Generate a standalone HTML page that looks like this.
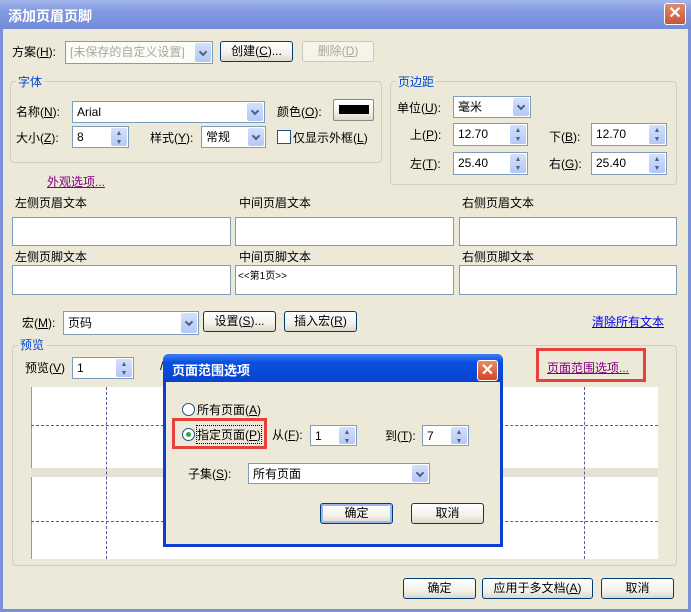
<!DOCTYPE html>
<html><head><meta charset="utf-8"><style>
*{box-sizing:border-box;margin:0;padding:0}
body{width:691px;height:612px;overflow:hidden;background:#fff;font-family:"Liberation Sans","Noto Sans CJK SC",sans-serif;font-size:12px;color:#000;position:relative}
.a{position:absolute;white-space:nowrap}
.win{left:0;top:0;width:691px;height:612px;background:#7c8fd9}
.body{left:3px;top:29px;width:685px;height:580px;background:#ECE9D8}
.title{left:0;top:0;width:691px;height:29px;background:linear-gradient(#a3b6ec,#8299e0 40%,#748cd9);color:#fff;font-weight:bold;font-size:14px;padding:6px 0 0 8px}
.x{width:22px;height:22px;border:1px solid #fff;border-radius:3px;background:linear-gradient(#e08a6e,#c8553a);color:#fff;font-size:16px;font-weight:bold;text-align:center;line-height:19px}
.btn{border:1px solid #003C74;border-radius:3px;background:linear-gradient(#fff,#f2f1ea 60%,#dcd8cc);text-align:center;line-height:18px}
.dis{border-color:#c9c7ba;color:#aca899;background:#f5f4ea}
.inp{background:#fff;border:1px solid #7F9DB9;padding:2px 0 0 4px;line-height:16px}
.dd{position:absolute;right:1px;top:1px;bottom:1px;width:16px;background:linear-gradient(#d4e0fc,#b5c8f6);border-radius:2px}
.dd::after{content:"";position:absolute;left:5px;top:50%;margin-top:-4px;width:4px;height:4px;border-right:2px solid #4d6185;border-bottom:2px solid #4d6185;transform:rotate(45deg)}
.sp{position:absolute;right:1px;top:1px;bottom:1px;width:16px;background:linear-gradient(#d4e0fc,#b5c8f6);border-radius:2px;color:#4d6185;font-size:7px;text-align:center;line-height:9px;padding-top:1px}
.grp{border:1px solid #d0d0bf;border-radius:4px}
.gt{color:#0046D5;background:#ECE9D8;padding:0 2px}
.box{background:#fff;border:1px solid #7F9DB9}
.lnk{color:#800080;text-decoration:underline}
u{text-decoration:underline}
.dh{height:0;border-top:1px dashed #555a9a}
.dv{width:0;border-left:1px dashed #555a9a}
</style></head><body>
<div class="a win"></div>
<div class="a body"></div>
<div class="a title">添加页眉页脚</div>
<div class="a x" style="left:664px;top:3px">✕</div>

<div class="a" style="left:12px;top:43px">方案(<u>H</u>):</div>
<div class="a inp" style="left:65px;top:41px;width:148px;height:23px;color:#aca899;background:#fbfbf8">[未保存的自定义设置]<div class="dd"></div></div>
<div class="a btn" style="left:220px;top:41px;width:73px;height:21px">创建(<u>C</u>)...</div>
<div class="a btn dis" style="left:302px;top:41px;width:72px;height:21px">删除(<u>D</u>)</div>

<div class="a grp" style="left:10px;top:81px;width:372px;height:82px"></div>
<div class="a gt" style="left:16px;top:73px">字体</div>
<div class="a" style="left:16px;top:103px">名称(<u>N</u>):</div>
<div class="a inp" style="left:72px;top:101px;width:193px;height:22px">Arial<div class="dd"></div></div>
<div class="a" style="left:277px;top:103px">颜色(<u>O</u>):</div>
<div class="a btn" style="left:333px;top:99px;width:41px;height:22px;border-color:#888;border-radius:2px"><div style="margin:5px auto;width:30px;height:9px;background:#000"></div></div>
<div class="a" style="left:16px;top:129px">大小(<u>Z</u>):</div>
<div class="a inp" style="left:72px;top:126px;width:57px;height:22px">8<div class="sp">▲<br>▼</div></div>
<div class="a" style="left:150px;top:129px">样式(<u>Y</u>):</div>
<div class="a inp" style="left:201px;top:126px;width:65px;height:22px">常规<div class="dd"></div></div>
<div class="a" style="left:277px;top:130px;width:14px;height:14px;border:1px solid #1c5180;background:#fff"></div>
<div class="a" style="left:293px;top:129px">仅显示外框(<u>L</u>)</div>

<div class="a grp" style="left:390px;top:81px;width:287px;height:104px"></div>
<div class="a gt" style="left:396px;top:73px">页边距</div>
<div class="a" style="left:397px;top:99px">单位(<u>U</u>):</div>
<div class="a inp" style="left:453px;top:96px;width:78px;height:22px">毫米<div class="dd"></div></div>
<div class="a" style="left:410px;top:126px">上(<u>P</u>):</div>
<div class="a inp" style="left:453px;top:123px;width:75px;height:23px">12.70<div class="sp">▲<br>▼</div></div>
<div class="a" style="left:549px;top:128px">下(<u>B</u>):</div>
<div class="a inp" style="left:591px;top:123px;width:76px;height:23px">12.70<div class="sp">▲<br>▼</div></div>
<div class="a" style="left:410px;top:155px">左(<u>T</u>):</div>
<div class="a inp" style="left:453px;top:152px;width:75px;height:23px">25.40<div class="sp">▲<br>▼</div></div>
<div class="a" style="left:549px;top:155px">右(<u>G</u>):</div>
<div class="a inp" style="left:591px;top:152px;width:76px;height:23px">25.40<div class="sp">▲<br>▼</div></div>

<div class="a lnk" style="left:47px;top:173px">外观选项...</div>
<div class="a" style="left:15px;top:194px">左侧页眉文本</div>
<div class="a" style="left:239px;top:194px">中间页眉文本</div>
<div class="a" style="left:462px;top:194px">右侧页眉文本</div>
<div class="a box" style="left:12px;top:217px;width:219px;height:29px"></div>
<div class="a box" style="left:235px;top:217px;width:219px;height:29px"></div>
<div class="a box" style="left:459px;top:217px;width:218px;height:29px"></div>
<div class="a" style="left:15px;top:248px">左侧页脚文本</div>
<div class="a" style="left:239px;top:248px">中间页脚文本</div>
<div class="a" style="left:462px;top:248px">右侧页脚文本</div>
<div class="a box" style="left:12px;top:265px;width:219px;height:30px"></div>
<div class="a box" style="left:235px;top:265px;width:219px;height:30px;font-size:10px;padding:1px 2px">&lt;&lt;第1页&gt;&gt;</div>
<div class="a box" style="left:459px;top:265px;width:218px;height:30px"></div>

<div class="a" style="left:22px;top:314px">宏(<u>M</u>):</div>
<div class="a inp" style="left:63px;top:311px;width:136px;height:24px;padding-top:3px">页码<div class="dd"></div></div>
<div class="a btn" style="left:203px;top:311px;width:73px;height:21px">设置(<u>S</u>)...</div>
<div class="a btn" style="left:284px;top:311px;width:73px;height:21px">插入宏(<u>R</u>)</div>
<div class="a" style="left:592px;top:313px;color:#0000ee;text-decoration:underline">清除所有文本</div>

<div class="a grp" style="left:12px;top:345px;width:665px;height:221px"></div>
<div class="a gt" style="left:18px;top:336px">预览</div>
<div class="a" style="left:25px;top:359px">预览(<u>V</u>)</div>
<div class="a inp" style="left:72px;top:357px;width:62px;height:22px">1<div class="sp">▲<br>▼</div></div>
<div class="a" style="left:160px;top:359px">/</div>
<div class="a" style="left:536px;top:348px;width:110px;height:34px;border:3px solid #e8403c"></div>
<div class="a lnk" style="left:547px;top:359px">页面范围选项...</div>
<div class="a" style="left:31px;top:387px;width:627px;height:172px;background:#fff;border-left:1px solid #999"></div>
<div class="a" style="left:31px;top:468px;width:627px;height:9px;background:#e6e3d6"></div>
<div class="a dh" style="left:31px;top:425px;width:627px"></div>
<div class="a dh" style="left:31px;top:521px;width:627px"></div>
<div class="a dv" style="left:106px;top:387px;height:172px"></div>
<div class="a dv" style="left:584px;top:387px;height:172px"></div>

<div class="a btn" style="left:403px;top:578px;width:73px;height:21px">确定</div>
<div class="a btn" style="left:482px;top:578px;width:111px;height:21px">应用于多文档(<u>A</u>)</div>
<div class="a btn" style="left:601px;top:578px;width:73px;height:21px">取消</div>

<!-- sub dialog -->
<div class="a" style="left:163px;top:354px;width:340px;height:193px;background:#0a3fd0;border-radius:6px 6px 0 0"></div>
<div class="a" style="left:166px;top:382px;width:334px;height:162px;background:#ECE9D8"></div>
<div class="a" style="left:163px;top:354px;width:340px;height:28px;border-radius:6px 6px 0 0;background:linear-gradient(#3d7cf0,#0a50e0 30%,#0842d0);color:#fff;font-weight:bold;font-size:13px;padding:6px 0 0 9px">页面范围选项</div>
<div class="a x" style="left:477px;top:360px;width:21px;height:21px;background:linear-gradient(#ea8b6a,#d3471f)">✕</div>
<div class="a" style="left:182px;top:403px;width:13px;height:13px;border-radius:50%;border:1px solid #1c5180;background:#fff"></div>
<div class="a" style="left:197px;top:401px">所有页面(<u>A</u>)</div>
<div class="a" style="left:172px;top:418px;width:95px;height:31px;border:3px solid #e8403c"></div>
<div class="a" style="left:182px;top:428px;width:13px;height:13px;border-radius:50%;border:1px solid #1c5180;background:#fff"><div style="width:5px;height:5px;border-radius:50%;background:#3aa83a;margin:3px"></div></div>
<div class="a" style="left:197px;top:426px;outline:1px dotted #000">指定页面(<u>P</u>)</div>
<div class="a" style="left:272px;top:426px">从(<u>F</u>):</div>
<div class="a inp" style="left:310px;top:425px;width:47px;height:21px">1<div class="sp">▲<br>▼</div></div>
<div class="a" style="left:385px;top:427px">到(<u>T</u>):</div>
<div class="a inp" style="left:422px;top:425px;width:47px;height:21px">7<div class="sp">▲<br>▼</div></div>
<div class="a" style="left:188px;top:465px">子集(<u>S</u>):</div>
<div class="a inp" style="left:248px;top:463px;width:182px;height:21px">所有页面<div class="dd"></div></div>
<div class="a btn" style="left:320px;top:503px;width:73px;height:21px;box-shadow:inset 0 0 0 2px #9bb7ec">确定</div>
<div class="a btn" style="left:411px;top:503px;width:73px;height:21px">取消</div>
</body></html>
